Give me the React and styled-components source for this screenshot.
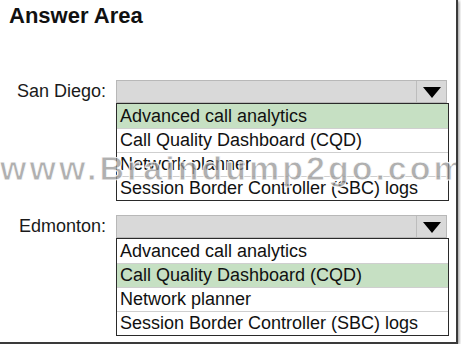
import React from "react";
import styled, { createGlobalStyle } from "styled-components";

const Global = createGlobalStyle`
  html, body { margin: 0; padding: 0; background: #fff; }
  body { font-family: "Liberation Sans", Arial, sans-serif; color: #111; }
`;

const options = [
  "Advanced call analytics",
  "Call Quality Dashboard (CQD)",
  "Network planner",
  "Session Border Controller (SBC) logs",
];

const questions = [
  { id: 0, label: "San Diego:", picked: 0 },
  { id: 1, label: "Edmonton:", picked: 1 },
];

const Dropdown = ({ picked }) => (
  <DropWrap>
    <SelectBox>
      <Arrow>
        <svg width="20" height="13" viewBox="0 0 20 13">
          <polygon points="1,1 19,1 10,12" fill="#000" />
        </svg>
      </Arrow>
    </SelectBox>
    <List>
      {options.map((o, i) => (
        <Item key={o} selected={i === picked}>{o}</Item>
      ))}
    </List>
  </DropWrap>
);

const App = () => {
  return (
    <>
      <Global />
      <Frame>
        <Title>Answer Area</Title>
        <Rows>
          {questions.map(q => (
            <Row key={q.id}>
              <Label>{q.label}</Label>
              <Dropdown picked={q.picked} />
            </Row>
          ))}
        </Rows>
        <Watermark>www.Braindump2go.com</Watermark>
      </Frame>
    </>
  );
};
export default App;

const Frame = styled.div`
  position: relative;
  box-sizing: border-box;
  width: 458px;
  height: 344px;
  border-right: 2px solid #3a3a3a;
  border-bottom: 2px solid #3a3a3a;
  box-shadow: 1px 1px 3px rgba(0,0,0,0.45);
  padding: 3px 0 0 9px;
  overflow: hidden;
`;

const Title = styled.div`
  font-weight: bold;
  font-size: 22px;
  line-height: 25px;
  color: #111;
`;

const Rows = styled.div`
  display: flex;
  flex-direction: column;
  gap: 14px;
  margin-top: 52px;
`;

const Row = styled.div`
  display: flex;
  align-items: flex-start;
`;

const Label = styled.div`
  width: 97px;
  text-align: right;
  font-size: 18px;
  line-height: 22px;
  padding-right: 10px;
  color: #1a1a1a;
`;

const DropWrap = styled.div`
  display: flex;
  flex-direction: column;
  width: 333px;
`;

const SelectBox = styled.div`
  box-sizing: border-box;
  width: 331px;
  height: 23px;
  background: #d9d9d9;
  border: 1px solid #b8b8b8;
  display: flex;
  justify-content: flex-end;
`;

const Arrow = styled.div`
  width: 29px;
  border-left: 1px solid #bdbdbd;
  display: flex;
  align-items: center;
  justify-content: center;
  padding-top: 2px;
`;

const List = styled.div`
  box-sizing: border-box;
  border: 1px solid #2a2a2a;
  display: flex;
  flex-direction: column;
`;

const Item = styled.div`
  height: 24px;
  line-height: 24px;
  font-size: 18px;
  padding-left: 3px;
  background: ${p => (p.selected ? "#c6e0c3" : "#fff")};
  color: #111;
  white-space: nowrap;
  & + & { border-top: 1px solid #cfcfcf; height: 23px; line-height: 23px; }
`;

const Watermark = styled.div`
  position: absolute;
  left: 0;
  top: 149px;
  font-size: 34px;
  font-weight: bold;
  letter-spacing: 3px;
  color: rgba(150,150,150,0.75);
  -webkit-text-stroke: 1px rgba(255,255,255,0.9);
  pointer-events: none;
  white-space: nowrap;
`;
